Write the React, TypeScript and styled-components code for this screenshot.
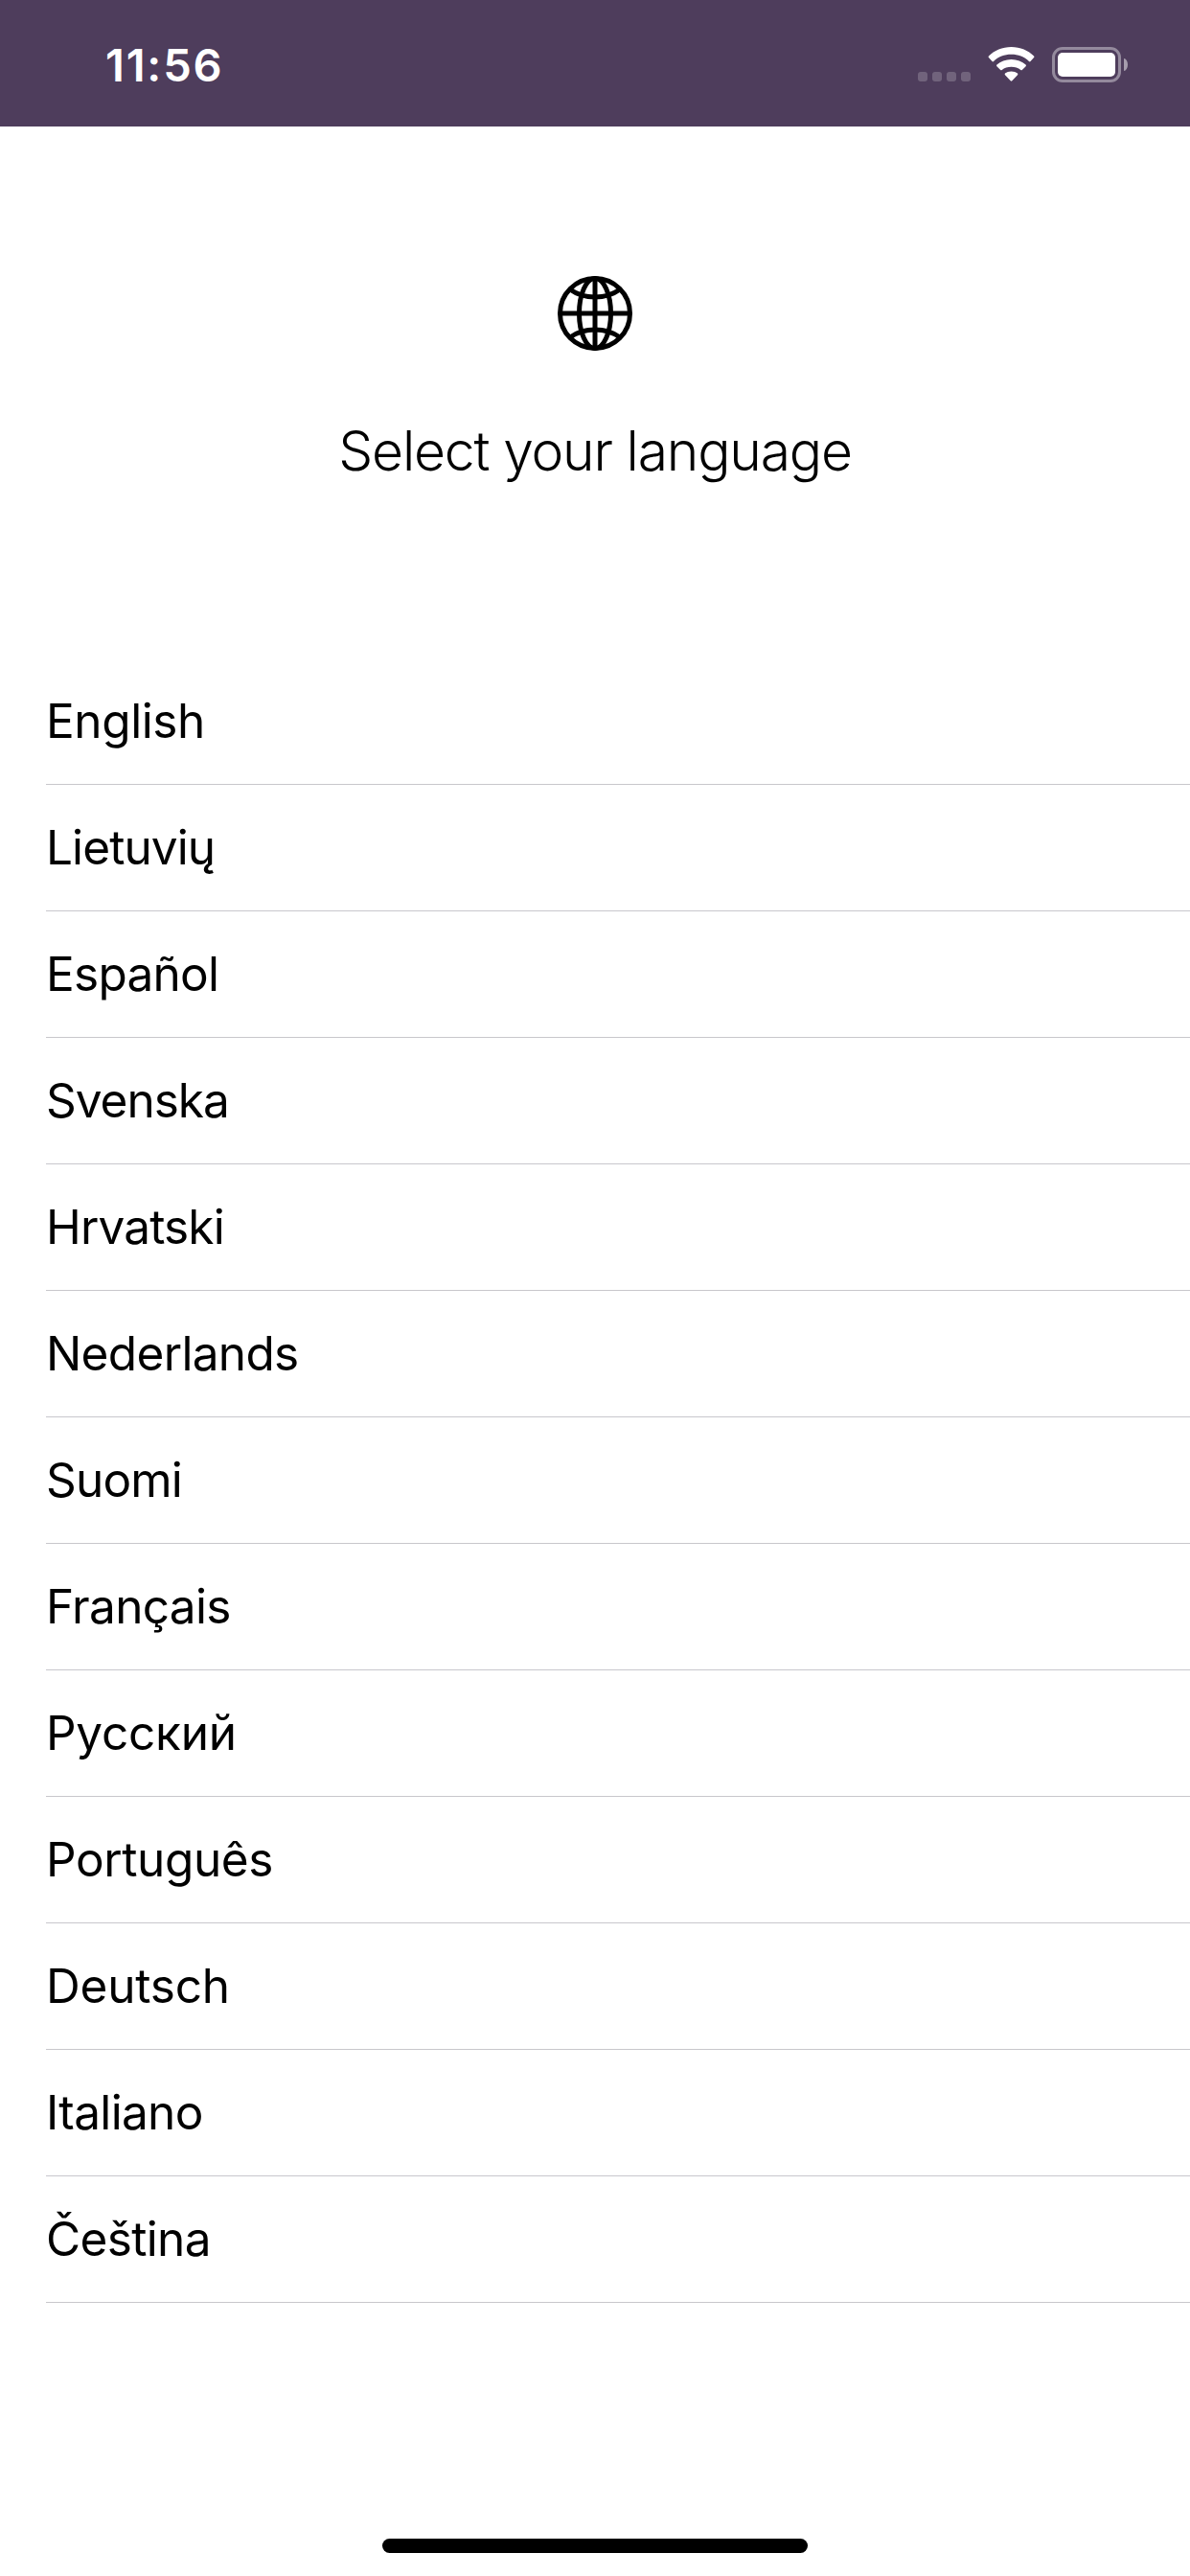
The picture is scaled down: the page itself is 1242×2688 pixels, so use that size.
import React from 'react';
import styled, { createGlobalStyle } from 'styled-components';

const GlobalStyle = createGlobalStyle`
  *, *::before, *::after { box-sizing: border-box; }
  body {
    margin: 0;
    background: #fff;
    color: #000;
    font-family: Inter, "Liberation Sans", sans-serif;
  }
`;

const Screen = styled.div`
  display: flex;
  flex-direction: column;
  width: 1242px;
  height: 2688px;
  overflow: hidden;
  background: #fff;
`;

const StatusBar = styled.header`
  display: flex;
  align-items: flex-start;
  justify-content: space-between;
  height: 132px;
  padding: 49px 65px 0 110px;
  background: #4e3d5c;
`;

const Clock = styled.time`
  color: #fff;
  font-size: 47px;
  font-weight: 600;
  line-height: 38px;
  letter-spacing: 1.8px;
`;

const StatusIcons = styled.div`
  display: flex;
  align-items: flex-start;
`;

const SignalDots = styled.div`
  display: flex;
  gap: 5px;
  margin: 26px 18px 0 0;
`;

const Dot = styled.span`
  width: 10px;
  height: 10px;
  border-radius: 3px;
  background: rgba(255, 255, 255, 0.2);
`;

const Battery = styled.div`
  display: flex;
  width: 72px;
  height: 37px;
  margin-left: 18px;
  padding: 3px;
  border: 3px solid rgba(255, 255, 255, 0.4);
  border-radius: 11px;
`;

const Charge = styled.span`
  flex: 1;
  border-radius: 5px;
  background: #fff;
`;

const BatteryCap = styled.span`
  width: 4px;
  height: 13px;
  margin: 12px 0 0 3px;
  border-radius: 0 4px 4px 0 / 0 6.5px 6.5px 0;
  background: rgba(255, 255, 255, 0.5);
`;

const Intro = styled.section`
  display: flex;
  flex-direction: column;
  align-items: center;
  height: 555px;
  padding-top: 156px;
`;

const Title = styled.h1`
  margin: 69px 0 0;
  font-size: 57px;
  font-weight: 300;
  line-height: 72px;
  letter-spacing: -1.2px;
  white-space: nowrap;
`;

const LanguageList = styled.ul`
  margin: 0;
  padding: 0 0 0 48px;
  list-style: none;
`;

const LanguageRow = styled.li<{ $tracking: number }>`
  height: 132px;
  border-bottom: 1px solid #c8c7cc;
  font-size: 49.5px;
  line-height: 130px;
  letter-spacing: ${({ $tracking }) => $tracking}px;
`;

const HomeArea = styled.footer`
  display: flex;
  flex: 1;
  align-items: flex-end;
  justify-content: center;
  padding-bottom: 24px;
`;

const HomeIndicator = styled.div`
  width: 444px;
  height: 15px;
  border-radius: 8px;
  background: #000;
`;

const WifiIcon = () => (
  <svg width="49" height="37" viewBox="0 0 49 37" fill="#fff">
    <path d="M24.5 0C33.8 0 42.3 3.6 48.1 9.5Q48.9 10.3 48.1 11.1L44.5 15Q43.8 15.8 43 15C38.1 10.3 31.7 7.8 24.5 7.8S10.9 10.3 6 15Q5.2 15.8 4.5 15L.9 11.1Q.1 10.3.9 9.5C6.7 3.6 15.2 0 24.5 0Z" />
    <path d="M24.5 12.9C30.4 12.9 35.7 15.1 39.6 18.6Q40.4 19.4 39.6 20.2L35.8 24Q35.1 24.7 34.3 24C31.7 21.8 28.2 20.7 24.5 20.7S17.3 21.8 14.7 24Q13.9 24.7 13.2 24L9.4 20.2Q8.6 19.4 9.4 18.6C13.3 15.1 18.6 12.9 24.5 12.9Z" />
    <path d="M24.5 25.4C27.2 25.4 29.3 26.2 31 27.6Q31.8 28.4 31 29.2L25.3 35.3Q24.5 36.1 23.7 35.3L18 29.2Q17.2 28.4 18 27.6C19.7 26.2 21.8 25.4 24.5 25.4Z" />
  </svg>
);

const GlobeIcon = () => (
  <svg width="78" height="78" viewBox="0 0 78 78" fill="none" stroke="#000" strokeWidth="5">
    <circle cx="39" cy="39" r="36.5" />
    <ellipse cx="39" cy="39" rx="16.5" ry="36.5" />
    <path d="M39 2V76M2 39H76" />
    <path d="M13 14Q24 22 39 22T65 14M13 64Q24 56 39 56T65 64" />
  </svg>
);

interface Language {
  name: string;
  tracking: number;
}

const languages: Language[] = [
  { name: 'English', tracking: -0.41 },
  { name: 'Lietuvių', tracking: -0.9 },
  { name: 'Español', tracking: -0.73 },
  { name: 'Svenska', tracking: -1 },
  { name: 'Hrvatski', tracking: -0.84 },
  { name: 'Nederlands', tracking: -0.67 },
  { name: 'Suomi', tracking: -0.8 },
  { name: 'Français', tracking: -0.67 },
  { name: 'Русский', tracking: -0.24 },
  { name: 'Português', tracking: -0.39 },
  { name: 'Deutsch', tracking: -0.21 },
  { name: 'Italiano', tracking: -0.65 },
  { name: 'Čeština', tracking: -0.65 },
];

export default function App() {
  return (
    <>
      <GlobalStyle />
      <Screen>
        <StatusBar>
          <Clock>11:56</Clock>
          <StatusIcons>
            <SignalDots>
              <Dot />
              <Dot />
              <Dot />
              <Dot />
            </SignalDots>
            <WifiIcon />
            <Battery>
              <Charge />
            </Battery>
            <BatteryCap />
          </StatusIcons>
        </StatusBar>
        <Intro>
          <GlobeIcon />
          <Title>Select your language</Title>
        </Intro>
        <LanguageList>
          {languages.map(({ name, tracking }) => (
            <LanguageRow key={name} $tracking={tracking}>
              {name}
            </LanguageRow>
          ))}
        </LanguageList>
        <HomeArea>
          <HomeIndicator />
        </HomeArea>
      </Screen>
    </>
  );
}
